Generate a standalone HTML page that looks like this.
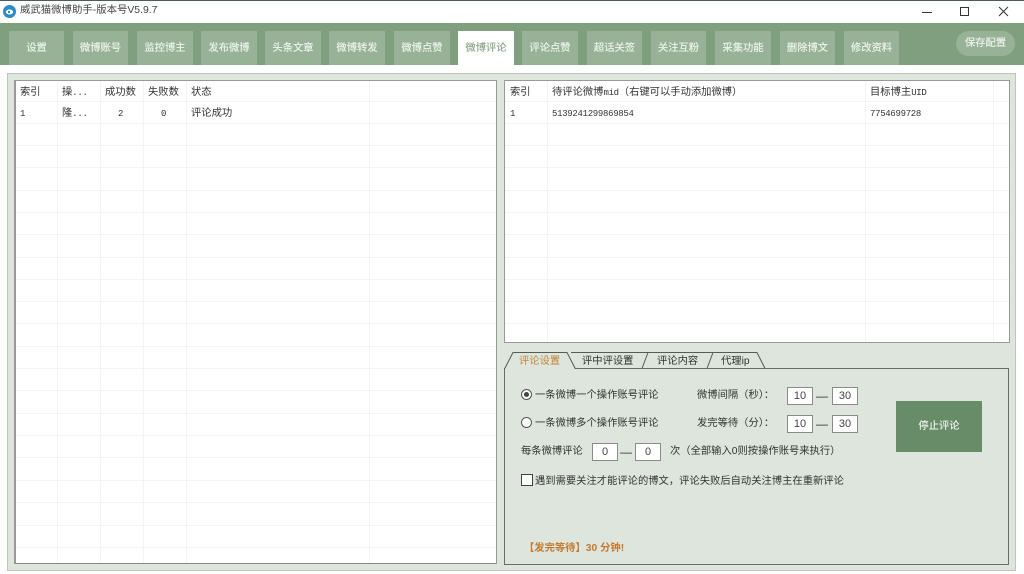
<!DOCTYPE html>
<html lang="zh"><head><meta charset="utf-8"><style>
html,body{margin:0;padding:0;background:#fff}
#p{position:relative;width:1024px;height:574px;overflow:hidden;background:#fff;font-family:"Liberation Sans","Noto Sans CJK SC",sans-serif;font-size:10.3px;color:#333;filter:blur(.3px)}
#p div{position:absolute}
.t{white-space:nowrap;line-height:14px}
.m{font-family:"Liberation Mono","Noto Sans CJK SC",monospace;font-size:9px;letter-spacing:-.3px}
.tab{top:31px;height:34px;background:#97b297;color:#e6eee6;text-align:center;line-height:35px;font-size:10.3px;font-weight:500;text-shadow:0 0 .3px #e6eee6}
.c{background:#fff;border:1px solid #8a8a8a;text-align:center;font-size:11px;line-height:17px;box-sizing:border-box;height:18px;color:#444}
</style></head><body><div id="p">
<div style="left:0;top:0;width:1024px;height:1px;background:#4c5c58"></div>
<svg style="position:absolute;left:2px;top:4px" width="15" height="15" viewBox="0 0 15 15"><circle cx="7.500" cy="7.500" r="6.500" fill="#2d8bc4"/><ellipse cx="7.500" cy="8" rx="3.600" ry="2.500" fill="#fff"/><circle cx="7" cy="8" r="1.200" fill="#2d8bc4"/></svg>
<div class="t" style="left:20px;top:4px;font-size:10.4px;color:#444">威武猫微博助手-版本号V5.9.7</div>
<svg style="position:absolute;left:915px;top:3px" width="100" height="18" viewBox="0 0 100 18" fill="none" stroke="#333"><path d="M7 9.500h10"/><rect x="45.500" y="4.500" width="8" height="8"/><path d="M84 4l9 9M93 4l-9 9"/></svg>

<div style="left:0;top:23px;width:1024px;height:42px;background:#7f9f7f"></div>
<div class="tab" style="left:9px;width:55px">设置</div>
<div class="tab" style="left:73px;width:55px">微博账号</div>
<div class="tab" style="left:137px;width:56px">监控博主</div>
<div class="tab" style="left:201px;width:56px">发布微博</div>
<div class="tab" style="left:265px;width:56px">头条文章</div>
<div class="tab" style="left:329px;width:56px">微博转发</div>
<div class="tab" style="left:394px;width:56px">微博点赞</div>
<div class="tab" style="left:458px;width:56px;background:#fff;color:#8aa58a;text-shadow:none">微博评论</div>
<div class="tab" style="left:522px;width:56px">评论点赞</div>
<div class="tab" style="left:587px;width:55px">超话关签</div>
<div class="tab" style="left:651px;width:55px">关注互粉</div>
<div class="tab" style="left:715px;width:56px">采集功能</div>
<div class="tab" style="left:780px;width:55px">删除博文</div>
<div class="tab" style="left:844px;width:55px">修改资料</div>
<div class="tab" style="left:956px;top:31px;width:59px;height:25px;line-height:25px;border-radius:13px">保存配置</div>

<div style="left:7px;top:73px;width:1009px;height:498px;background:#dde5dc;border:1px solid #bcc6ba;box-sizing:border-box"></div>

<!-- left table -->
<div style="left:14px;top:80px;width:483px;height:484px;background:#fff;border:1px solid #999;border-left:2px solid #999;border-bottom-color:#888;box-sizing:border-box"></div>
<svg style="position:absolute;left:16px;top:81px" width="480" height="482" stroke="#f4f4f4" fill="none">
<path d="M41.500 0V482M84.500 0V482M127.500 0V482M170.500 0V482M353.500 0V482"/>
<path d="M0 20.500H480M0 42.500H480M0 64.500H480M0 86.500H480M0 109.500H480M0 131.500H480M0 153.500H480M0 176.500H480M0 198.500H480M0 220.500H480M0 242.500H480M0 265.500H480M0 287.500H480M0 309.500H480M0 332.500H480M0 354.500H480M0 376.500H480M0 399.500H480M0 421.500H480M0 444.500H480M0 466.500H480"/></svg>
<div class="t" style="left:20px;top:86px">索引</div>
<div class="t" style="left:62px;top:86px">操<span class="m">...</span></div>
<div class="t" style="left:105px;top:86px">成功数</div>
<div class="t" style="left:148px;top:86px">失败数</div>
<div class="t" style="left:191px;top:86px">状态</div>
<div class="t m" style="left:20px;top:107px">1</div>
<div class="t" style="left:62px;top:107px">隆<span class="m">...</span></div>
<div class="t m" style="left:118px;top:107px">2</div>
<div class="t m" style="left:161px;top:107px">0</div>
<div class="t" style="left:191px;top:107px">评论成功</div>

<!-- right table -->
<div style="left:504px;top:80px;width:506px;height:263px;background:#fff;border:1px solid #999;box-sizing:border-box"></div>
<svg style="position:absolute;left:505px;top:81px" width="504" height="261" stroke="#f4f4f4" fill="none">
<path d="M42.500 0V261M360.500 0V261M488.500 0V261"/>
<path d="M0 20.500H504M0 42.500H504M0 64.500H504M0 86.500H504M0 109.500H504M0 131.500H504M0 153.500H504M0 176.500H504M0 198.500H504M0 220.500H504M0 242.500H504"/></svg>
<div class="t" style="left:510px;top:86px">索引</div>
<div class="t" style="left:552px;top:86px">待评论微博<span class="m">mid</span>（右键可以手动添加微博）</div>
<div class="t" style="left:870px;top:86px">目标博主<span class="m">UID</span></div>
<div class="t m" style="left:552px;top:107px">5139241299869854</div>
<div class="t m" style="left:510px;top:107px">1</div>
<div class="t m" style="left:870px;top:107px">7754699728</div>

<!-- tab panel -->
<div style="left:504px;top:368px;width:505px;height:197px;border:1px solid #666e66;box-sizing:border-box"></div>
<svg style="position:absolute;left:500px;top:348px" width="280" height="24" fill="none" stroke="#555c55">
<path d="M5 20.500H75" stroke="#dde5dc" stroke-width="2"/>
<path d="M4.500 21L13 4.500H67L75.500 21"/>
<path d="M71 4.500H257L265 20.500M142 20.500L148 4.500M207 20.500L213 4.500"/>
</svg>
<div class="t" style="left:519px;top:355px;color:#c8843c">评论设置</div>
<div class="t" style="left:582px;top:355px">评中评设置</div>
<div class="t" style="left:657px;top:355px">评论内容</div>
<div class="t" style="left:721px;top:355px">代理ip</div>

<svg style="position:absolute;left:520px;top:388px" width="14" height="42" fill="#fff" stroke="#555"><circle cx="6.500" cy="6.500" r="5"/><circle cx="6.500" cy="6.500" r="2.500" fill="#444" stroke="none"/><circle cx="6.500" cy="34.500" r="5"/></svg>
<div class="t" style="left:535px;top:389px">一条微博一个操作账号评论</div>
<div class="t" style="left:535px;top:417px">一条微博多个操作账号评论</div>
<div class="t" style="left:697px;top:389px">微博间隔（秒）：</div>
<div class="t" style="left:697px;top:417px">发完等待（分）：</div>
<div class="c" style="left:787px;top:387px;width:26px">10</div>
<div class="t" style="left:816px;top:389px;font-size:12px">—</div>
<div class="c" style="left:832px;top:387px;width:26px">30</div>
<div class="c" style="left:787px;top:415px;width:26px">10</div>
<div class="t" style="left:816px;top:417px;font-size:12px">—</div>
<div class="c" style="left:832px;top:415px;width:26px">30</div>
<div class="t" style="left:521px;top:445px">每条微博评论</div>
<div class="c" style="left:592px;top:443px;width:26px">0</div>
<div class="t" style="left:620px;top:445px;font-size:12px">—</div>
<div class="c" style="left:635px;top:443px;width:26px">0</div>
<div class="t" style="left:670px;top:445px">次（全部输入0则按操作账号来执行）</div>
<div style="left:521px;top:474px;width:10px;height:10px;background:#fff;border:1px solid #444"></div>
<div class="t" style="left:535px;top:475px">遇到需要关注才能评论的博文，评论失败后自动关注博主在重新评论</div>
<div class="t" style="left:524px;top:542px;color:#c47a30;font-weight:bold">【发完等待】30 分钟!</div>
<div style="left:896px;top:401px;width:86px;height:51px;background:#678c67;color:#eef3ee;text-align:center;line-height:52px;font-weight:500">停止评论</div>
</div></body></html>
